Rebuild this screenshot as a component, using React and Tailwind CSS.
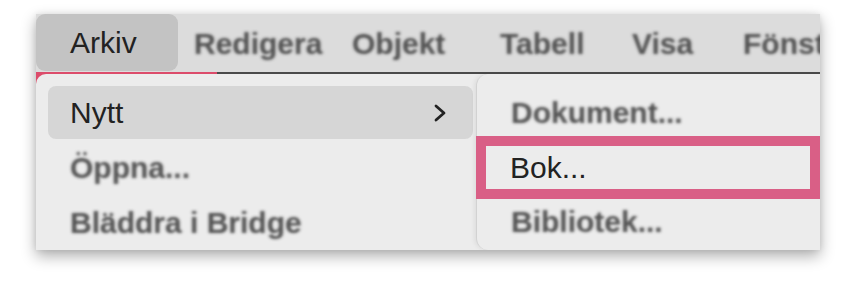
export default function App() {
  const font = { fontFamily: '"Liberation Sans", Arial, sans-serif' };
  const barItems = [
    { label: "Redigera", w: "w-[158px]" },
    { label: "Objekt", w: "w-[148px]" },
    { label: "Tabell", w: "w-[132px]" },
    { label: "Visa", w: "w-[111px]" },
    { label: "Fönster", w: "w-[120px]" },
  ];
  // blurred-out text, done with a text shadow on transparent glyphs
  const fuzzy =
    "text-[30px] font-bold text-transparent [text-shadow:0_0_3px_rgba(75,75,75,0.95)]";

  return (
    <div className="w-[848px] h-[282px] bg-white pt-[14px] pl-[36px]" style={font}>
      <div className="w-[784px] h-[236px] flex flex-col overflow-hidden shadow-[0_6px_14px_rgba(0,0,0,0.32),0_0_6px_rgba(0,0,0,0.08)]">
        {/* menu bar */}
        <div className="h-[58px] bg-[#dcdcdc] flex items-center overflow-hidden whitespace-nowrap text-[30px]">
          <div className="w-[142px] h-[57px] shrink-0 self-start rounded-[9px] bg-[#c3c3c3] flex items-center pl-[34px] text-[#222]">
            Arkiv
          </div>
          <div className="w-[16px] shrink-0" />
          {barItems.map((it) => (
            <div key={it.label} className={`${it.w} shrink-0 ${fuzzy}`}>
              {it.label}
            </div>
          ))}
        </div>
        <div className="h-[2px] flex">
          <div className="w-[181px] bg-[#dc4c6b]" />
          <div className="flex-1 bg-[#4a4a4a]" />
        </div>

        {/* menus */}
        <div className="flex-1 flex bg-[#ececec]">
          <div className="w-[440px] shrink-0 bg-[#dc4c6b]">
            <div className="h-full rounded-tl-[10px] bg-[#ececec] pt-[12px] pl-[12px] pr-[3px] flex flex-col gap-[2px]">
              <div className="h-[53px] rounded-[8px] bg-[#d6d6d6] flex items-center justify-between pl-[22px] pr-[26px] text-[30px] text-[#222]">
                <span>Nytt</span>
                <svg width="14" height="18" viewBox="0 0 14 18" fill="none">
                  <polyline points="3,2 11,9 3,16" stroke="#222" strokeWidth="2.8" strokeLinecap="round" strokeLinejoin="round" />
                </svg>
              </div>
              <div className={`h-[53px] flex items-center pl-[22px] ${fuzzy}`}>Öppna...</div>
              <div className={`h-[53px] flex items-center pl-[22px] ${fuzzy}`}>Bläddra i Bridge</div>
            </div>
          </div>
          <div className="w-[344px] shrink-0 rounded-l-[12px] bg-[#ececec] border-l border-[#d2d2d2] shadow-[-2px_0_4px_rgba(0,0,0,0.06)] pt-[14px] flex flex-col">
            <div className={`h-[48px] flex items-center pl-[34px] ${fuzzy}`}>Dokument...</div>
            <div className="h-[63px] -ml-px border-[10px] border-[#d95f86] flex items-center pl-[24px] text-[30px] text-[#222]">
              Bok...
            </div>
            <div className={`h-[44px] flex items-center pl-[34px] ${fuzzy}`}>Bibliotek...</div>
          </div>
        </div>
      </div>
    </div>
  );
}
